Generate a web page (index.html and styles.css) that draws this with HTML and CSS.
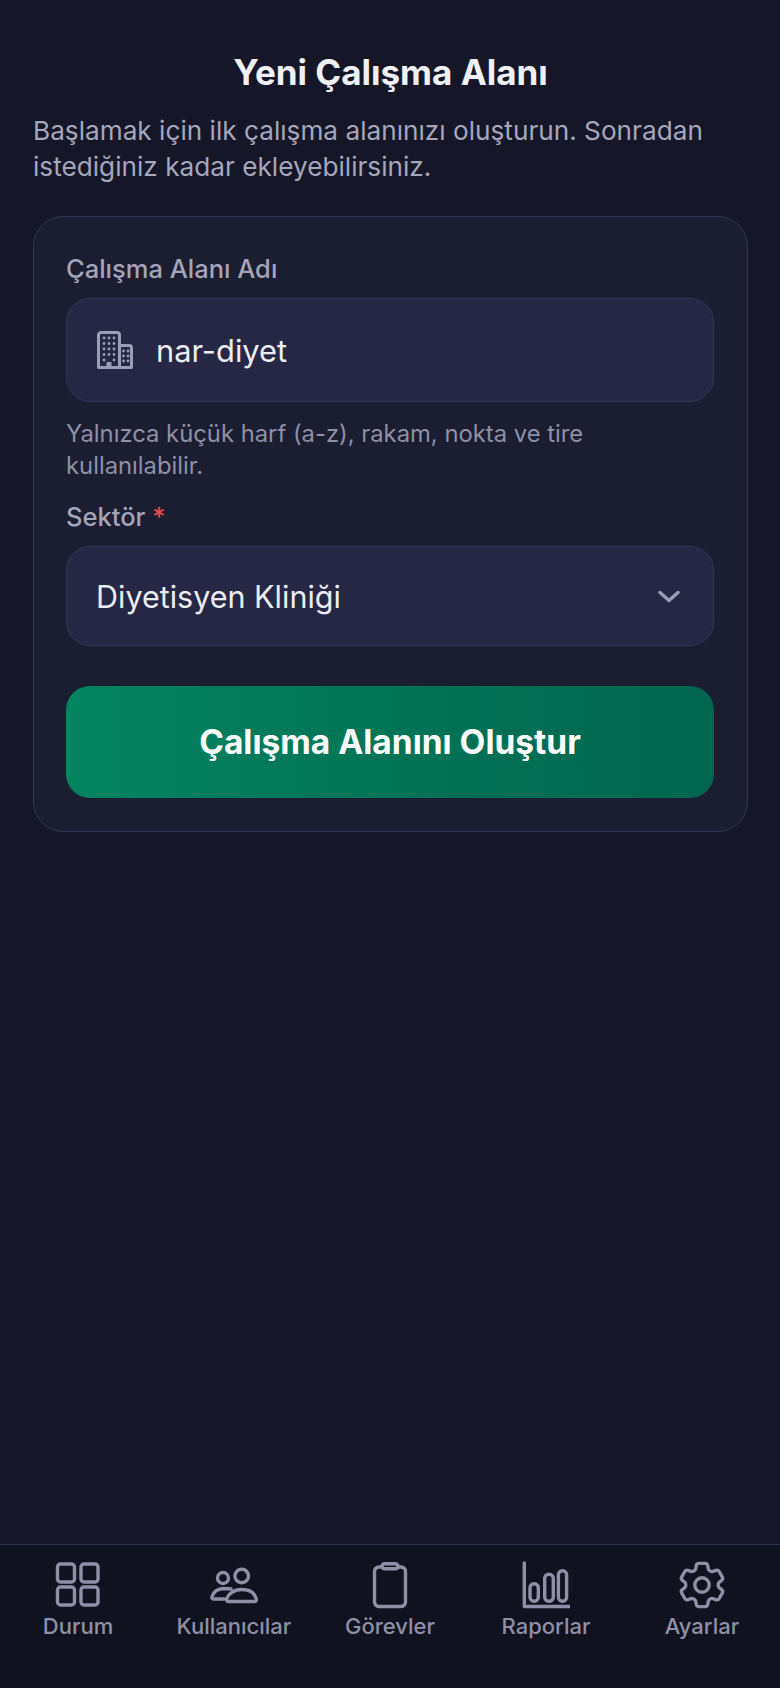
FILE: index.html
```html
<!DOCTYPE html>
<html lang="tr">
<head>
    <meta charset="UTF-8">
    <meta name="viewport" content="width=device-width, initial-scale=1.0">
    <title>Yeni Çalışma Alanı</title>
    <link rel="stylesheet" href="styles.css">
</head>
<body>
    <main class="content">
        <h1 class="page-title">Yeni Çalışma Alanı</h1>
        <p class="intro">Başlamak için ilk çalışma alanınızı oluşturun. Sonradan istediğiniz kadar ekleyebilirsiniz.</p>

        <form class="card">
            <div class="field-label">Çalışma Alanı Adı</div>
            <div class="input-box">
                <svg class="input-icon" viewBox="0 0 36 38" fill="none">
                    <path d="M1.500 36.500V4A2.500 2.500 0 0 1 4 1.500H20A2.500 2.500 0 0 1 22.500 4V36.500Z" stroke="#9c9cb6" stroke-width="3" stroke-linejoin="round"/>
                    <path d="M22.500 14.500H32A2.500 2.500 0 0 1 34.500 17V36.500H22.500" stroke="#9c9cb6" stroke-width="3" stroke-linejoin="round"/>
                    <path d="M9.500 37V31H14.500V37Z" fill="#9c9cb6"/>
                    <path d="M7 7h.01M12 7h.01M17 7h.01M7 12.500h.01M12 12.500h.01M17 12.500h.01M7 18h.01M12 18h.01M17 18h.01M7 23.500h.01M12 23.500h.01M17 23.500h.01M7 29h.01M17 29h.01M26.500 20h.01M31 20h.01M26.500 25h.01M31 25h.01M26.500 30h.01M31 30h.01" stroke="#9c9cb6" stroke-width="2.800" stroke-linecap="round"/>
                </svg>
                <span class="input-value">nar-diyet</span>
            </div>
            <p class="hint">Yalnızca küçük harf (a-z), rakam, nokta ve tire kullanılabilir.</p>

            <div class="field-label">Sektör <span class="required">*</span></div>
            <div class="select-box">
                <span class="input-value select-value">Diyetisyen Kliniği</span>
                <svg class="chevron" viewBox="0 0 22 13" fill="none">
                    <path d="M2 2.500L11 10.500L20 2.500" stroke="#9c9cb6" stroke-width="3.400" stroke-linecap="round" stroke-linejoin="round"/>
                </svg>
            </div>

            <button type="button" class="submit-btn">Çalışma Alanını Oluştur</button>
        </form>
    </main>

    <nav class="bottom-nav">
        <div class="nav-item">
            <svg class="nav-icon" viewBox="0 0 48 48" fill="none">
                <rect x="3.500" y="3" width="17" height="18" rx="3"/>
                <rect x="27" y="3" width="17" height="18" rx="3"/>
                <rect x="3.500" y="26" width="17" height="18" rx="3"/>
                <rect x="27" y="26" width="17" height="18" rx="3"/>
            </svg>
            <span>Durum</span>
        </div>
        <div class="nav-item">
            <svg class="nav-icon" viewBox="0 0 48 48" fill="none">
                <circle cx="13" cy="17" r="5.500"/>
                <circle cx="31.700" cy="15" r="6.800"/>
                <path d="M21 28C19 27.500 17 27.500 13 27.500C8 28 3.500 31 2 35.500C1.500 37 2.300 38 3.500 38H14"/>
                <path d="M18.500 40.500C16.800 40.500 16 39 17 37C20 31 26 28.500 32 28.500C38 28.500 44 31 46 37C47 39 46.200 40.500 44.500 40.500Z"/>
            </svg>
            <span>Kullanıcılar</span>
        </div>
        <div class="nav-item">
            <svg class="nav-icon" viewBox="0 0 48 48" fill="none">
                <path d="M16 6H13A4.500 4.500 0 0 0 8.500 10.500V41A4.500 4.500 0 0 0 13 45.500H35A4.500 4.500 0 0 0 39.500 41V10.500A4.500 4.500 0 0 0 35 6H32"/>
                <rect x="16" y="2.700" width="16" height="5" rx="2.500"/>
            </svg>
            <span>Görevler</span>
        </div>
        <div class="nav-item">
            <svg class="nav-icon" viewBox="0 0 48 48" fill="none">
                <path d="M2.300 2V45.500H47"/>
                <rect x="8" y="22.700" width="8.300" height="17.600" rx="4"/>
                <rect x="22.700" y="13.200" width="8.600" height="27.100" rx="4"/>
                <rect x="36.400" y="9.700" width="8.200" height="30.600" rx="4"/>
            </svg>
            <span>Raporlar</span>
        </div>
        <div class="nav-item">
            <svg class="nav-icon nav-icon-gear" viewBox="2 2 20 20" fill="none">
                <path d="M9.594 3.940c.09-.542.56-.94 1.110-.94h2.593c.55 0 1.020.398 1.110.94l.213 1.281c.063.374.313.686.645.870.074.040.147.083.22.127.325.196.72.257 1.075.124l1.217-.456a1.125 1.125 0 0 1 1.370.49l1.296 2.247a1.125 1.125 0 0 1-.26 1.431l-1.003.827c-.293.241-.438.613-.43.992a7.723 7.723 0 0 1 0 .255c-.008.378.137.75.43.991l1.004.827c.424.35.534.955.26 1.430l-1.298 2.247a1.125 1.125 0 0 1-1.369.491l-1.217-.456c-.355-.133-.75-.072-1.076.124a6.470 6.470 0 0 1-.22.128c-.331.183-.581.495-.644.869l-.213 1.281c-.09.543-.56.94-1.110.94h-2.594c-.55 0-1.019-.398-1.110-.94l-.213-1.281c-.062-.374-.312-.686-.644-.87a6.520 6.520 0 0 1-.22-.127c-.325-.196-.72-.257-1.076-.124l-1.217.456a1.125 1.125 0 0 1-1.369-.49l-1.297-2.247a1.125 1.125 0 0 1 .26-1.431l1.004-.827c.292-.24.437-.613.43-.991a6.932 6.932 0 0 1 0-.255c.007-.38-.138-.751-.43-.992l-1.004-.827a1.125 1.125 0 0 1-.26-1.430l1.297-2.247a1.125 1.125 0 0 1 1.370-.491l1.216.456c.356.133.751.072 1.076-.124.072-.044.146-.086.22-.128.332-.183.582-.495.644-.869l.214-1.280Z"/>
                <circle cx="12" cy="12" r="3"/>
            </svg>
            <span>Ayarlar</span>
        </div>
    </nav>
</body>
</html>
```
FILE: styles.css
```css
* {
    box-sizing: border-box;
}
html, body {
    height: 100%;
}
body {
    margin: 0;
    background-color: #151728;
    font-family: Inter, "Liberation Sans", sans-serif;
    display: flex;
    flex-direction: column;
}
.content {
    flex: 1;
    padding: 50px 32px 0 33px;
}
.page-title {
    margin: 0 0 19px;
    color: #f0f0f7;
    font-size: 35px;
    font-weight: 700;
    line-height: 44px;
    text-align: center;
}
.intro {
    margin: 0 0 31px;
    color: #a6a6bc;
    font-size: 26.200px;
    line-height: 36px;
}
.card {
    background-color: #1b1d30;
    border: 1.5px solid #32345a;
    border-radius: 30px;
    padding: 35px 33px 33px 32px;
}
.field-label {
    color: #a4a4ba;
    font-size: 25.500px;
    font-weight: 500;
    line-height: 34px;
    margin-bottom: 12px;
}
.required {
    color: #e5484d;
}
.input-box, .select-box {
    display: flex;
    align-items: center;
    background-color: #252744;
    border: 1.5px solid #33355a;
    border-radius: 24px;
}
.input-box {
    height: 104px;
    padding: 0 30px;
}
.select-box {
    height: 100px;
    padding: 0 33px 0 29px;
    justify-content: space-between;
}
.input-icon {
    width: 36px;
    height: 38px;
    margin-right: 23px;
}
.input-value {
    color: #ececf5;
    font-size: 30.800px;
}
.select-value {
    font-size: 30.500px;
}
.chevron {
    width: 22px;
    height: 13px;
}
.hint {
    margin: 15.500px 0 18.500px;
    color: #8f8fa8;
    font-size: 23.800px;
    line-height: 32px;
}
.submit-btn {
    display: block;
    width: 100%;
    height: 112px;
    margin-top: 40px;
    border: none;
    border-radius: 24px;
    background: linear-gradient(90deg, #03845f, #01654e);
    color: #ffffff;
    font-family: inherit;
    font-size: 33.500px;
    font-weight: 700;
    cursor: pointer;
}
.bottom-nav {
    display: flex;
    height: 144px;
    padding-top: 16px;
    background-color: #10121f;
    border-top: 1.5px solid #2e3050;
}
.nav-item {
    flex: 1;
    display: flex;
    flex-direction: column;
    align-items: center;
    gap: 4px;
    color: #8f90a8;
    font-size: 22px;
    font-weight: 500;
}
.nav-icon {
    width: 48px;
    height: 48px;
    stroke: #8f90a8;
    stroke-width: 3.400;
    stroke-linejoin: round;
    stroke-linecap: round;
}
.nav-icon-gear {
    stroke-width: 1.400;
}
```
